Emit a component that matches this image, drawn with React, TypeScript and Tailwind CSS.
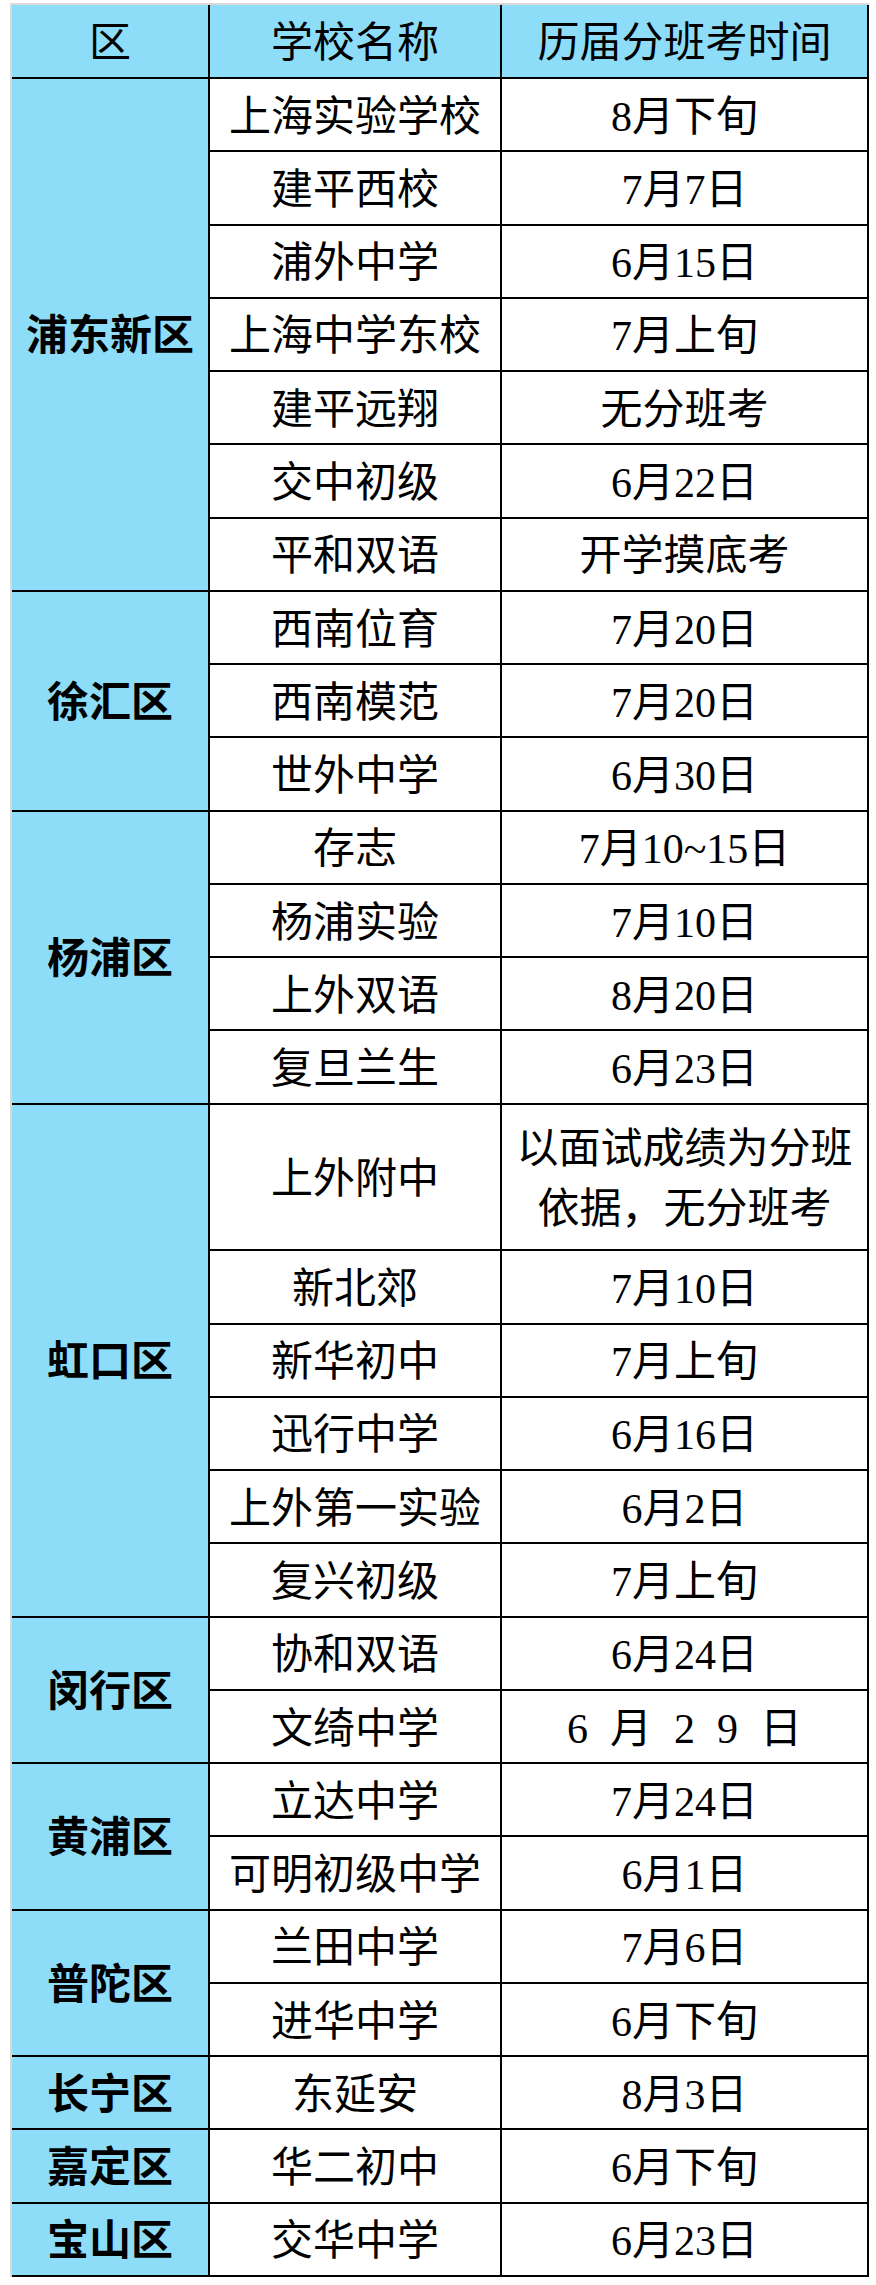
import React from "react";

type School = { name: string; time: React.ReactNode; span?: number };
type District = { name: string; schools: School[] };

const districts: District[] = [
    {
        name: "浦东新区",
        schools: [
            { name: "上海实验学校", time: "8月下旬" },
            { name: "建平西校", time: "7月7日" },
            { name: "浦外中学", time: "6月15日" },
            { name: "上海中学东校", time: "7月上旬" },
            { name: "建平远翔", time: "无分班考" },
            { name: "交中初级", time: "6月22日" },
            { name: "平和双语", time: "开学摸底考" },
        ],
    },
    {
        name: "徐汇区",
        schools: [
            { name: "西南位育", time: "7月20日" },
            { name: "西南模范", time: "7月20日" },
            { name: "世外中学", time: "6月30日" },
        ],
    },
    {
        name: "杨浦区",
        schools: [
            { name: "存志", time: "7月10~15日" },
            { name: "杨浦实验", time: "7月10日" },
            { name: "上外双语", time: "8月20日" },
            { name: "复旦兰生", time: "6月23日" },
        ],
    },
    {
        name: "虹口区",
        schools: [
            {
                name: "上外附中",
                span: 2,
                time: (
                    <span className="leading-[60px]">
                        以面试成绩为分班
                        <br />
                        依据，无分班考
                    </span>
                ),
            },
            { name: "新北郊", time: "7月10日" },
            { name: "新华初中", time: "7月上旬" },
            { name: "迅行中学", time: "6月16日" },
            { name: "上外第一实验", time: "6月2日" },
            { name: "复兴初级", time: "7月上旬" },
        ],
    },
    {
        name: "闵行区",
        schools: [
            { name: "协和双语", time: "6月24日" },
            {
                name: "文绮中学",
                time: (
                    <span className="inline-flex gap-[22px]">
                        <span>6</span>
                        <span>月</span>
                        <span>2</span>
                        <span>9</span>
                        <span>日</span>
                    </span>
                ),
            },
        ],
    },
    {
        name: "黄浦区",
        schools: [
            { name: "立达中学", time: "7月24日" },
            { name: "可明初级中学", time: "6月1日" },
        ],
    },
    {
        name: "普陀区",
        schools: [
            { name: "兰田中学", time: "7月6日" },
            { name: "进华中学", time: "6月下旬" },
        ],
    },
    { name: "长宁区", schools: [{ name: "东延安", time: "8月3日" }] },
    { name: "嘉定区", schools: [{ name: "华二初中", time: "6月下旬" }] },
    { name: "宝山区", schools: [{ name: "交华中学", time: "6月23日" }] },
];

const ROW = 73.27;
const cell = "flex items-center justify-center text-center pt-[4px] border-b-2 border-r-2 border-black";

export default function App() {
    return (
        <div
            className="bg-white w-[876px] h-[2285px] pt-[3px] pl-[10px] text-black text-[42px] leading-none"
            style={{ fontFamily: '"Liberation Serif", "Noto Sans CJK SC", serif' }}
        >
            <div className="grid w-[859px] grid-cols-[198px_292px_367px] border-t-2 border-l-2 border-[#d9d9d9]">
                <div className={`${cell} h-[74px] bg-[#8ddcf8]`}>区</div>
                <div className={`${cell} h-[74px] bg-[#8ddcf8]`}>学校名称</div>
                <div className={`${cell} h-[74px] bg-[#8ddcf8]`}>历届分班考时间</div>

                {districts.map((d) => {
                    const units = d.schools.reduce((n, s) => n + (s.span ?? 1), 0);
                    return (
                        <React.Fragment key={d.name}>
                            <div
                                className={`${cell} col-start-1 bg-[#8ddcf8] font-bold`}
                                style={{ gridRow: `span ${units}`, height: units * ROW }}
                            >
                                {d.name}
                            </div>
                            {d.schools.map((s) => (
                                <React.Fragment key={s.name}>
                                    <div
                                        className={`${cell} col-start-2`}
                                        style={{ gridRow: `span ${s.span ?? 1}`, height: (s.span ?? 1) * ROW }}
                                    >
                                        {s.name}
                                    </div>
                                    <div
                                        className={`${cell} col-start-3`}
                                        style={{ gridRow: `span ${s.span ?? 1}`, height: (s.span ?? 1) * ROW }}
                                    >
                                        {s.time}
                                    </div>
                                </React.Fragment>
                            ))}
                        </React.Fragment>
                    );
                })}
            </div>
        </div>
    );
}
